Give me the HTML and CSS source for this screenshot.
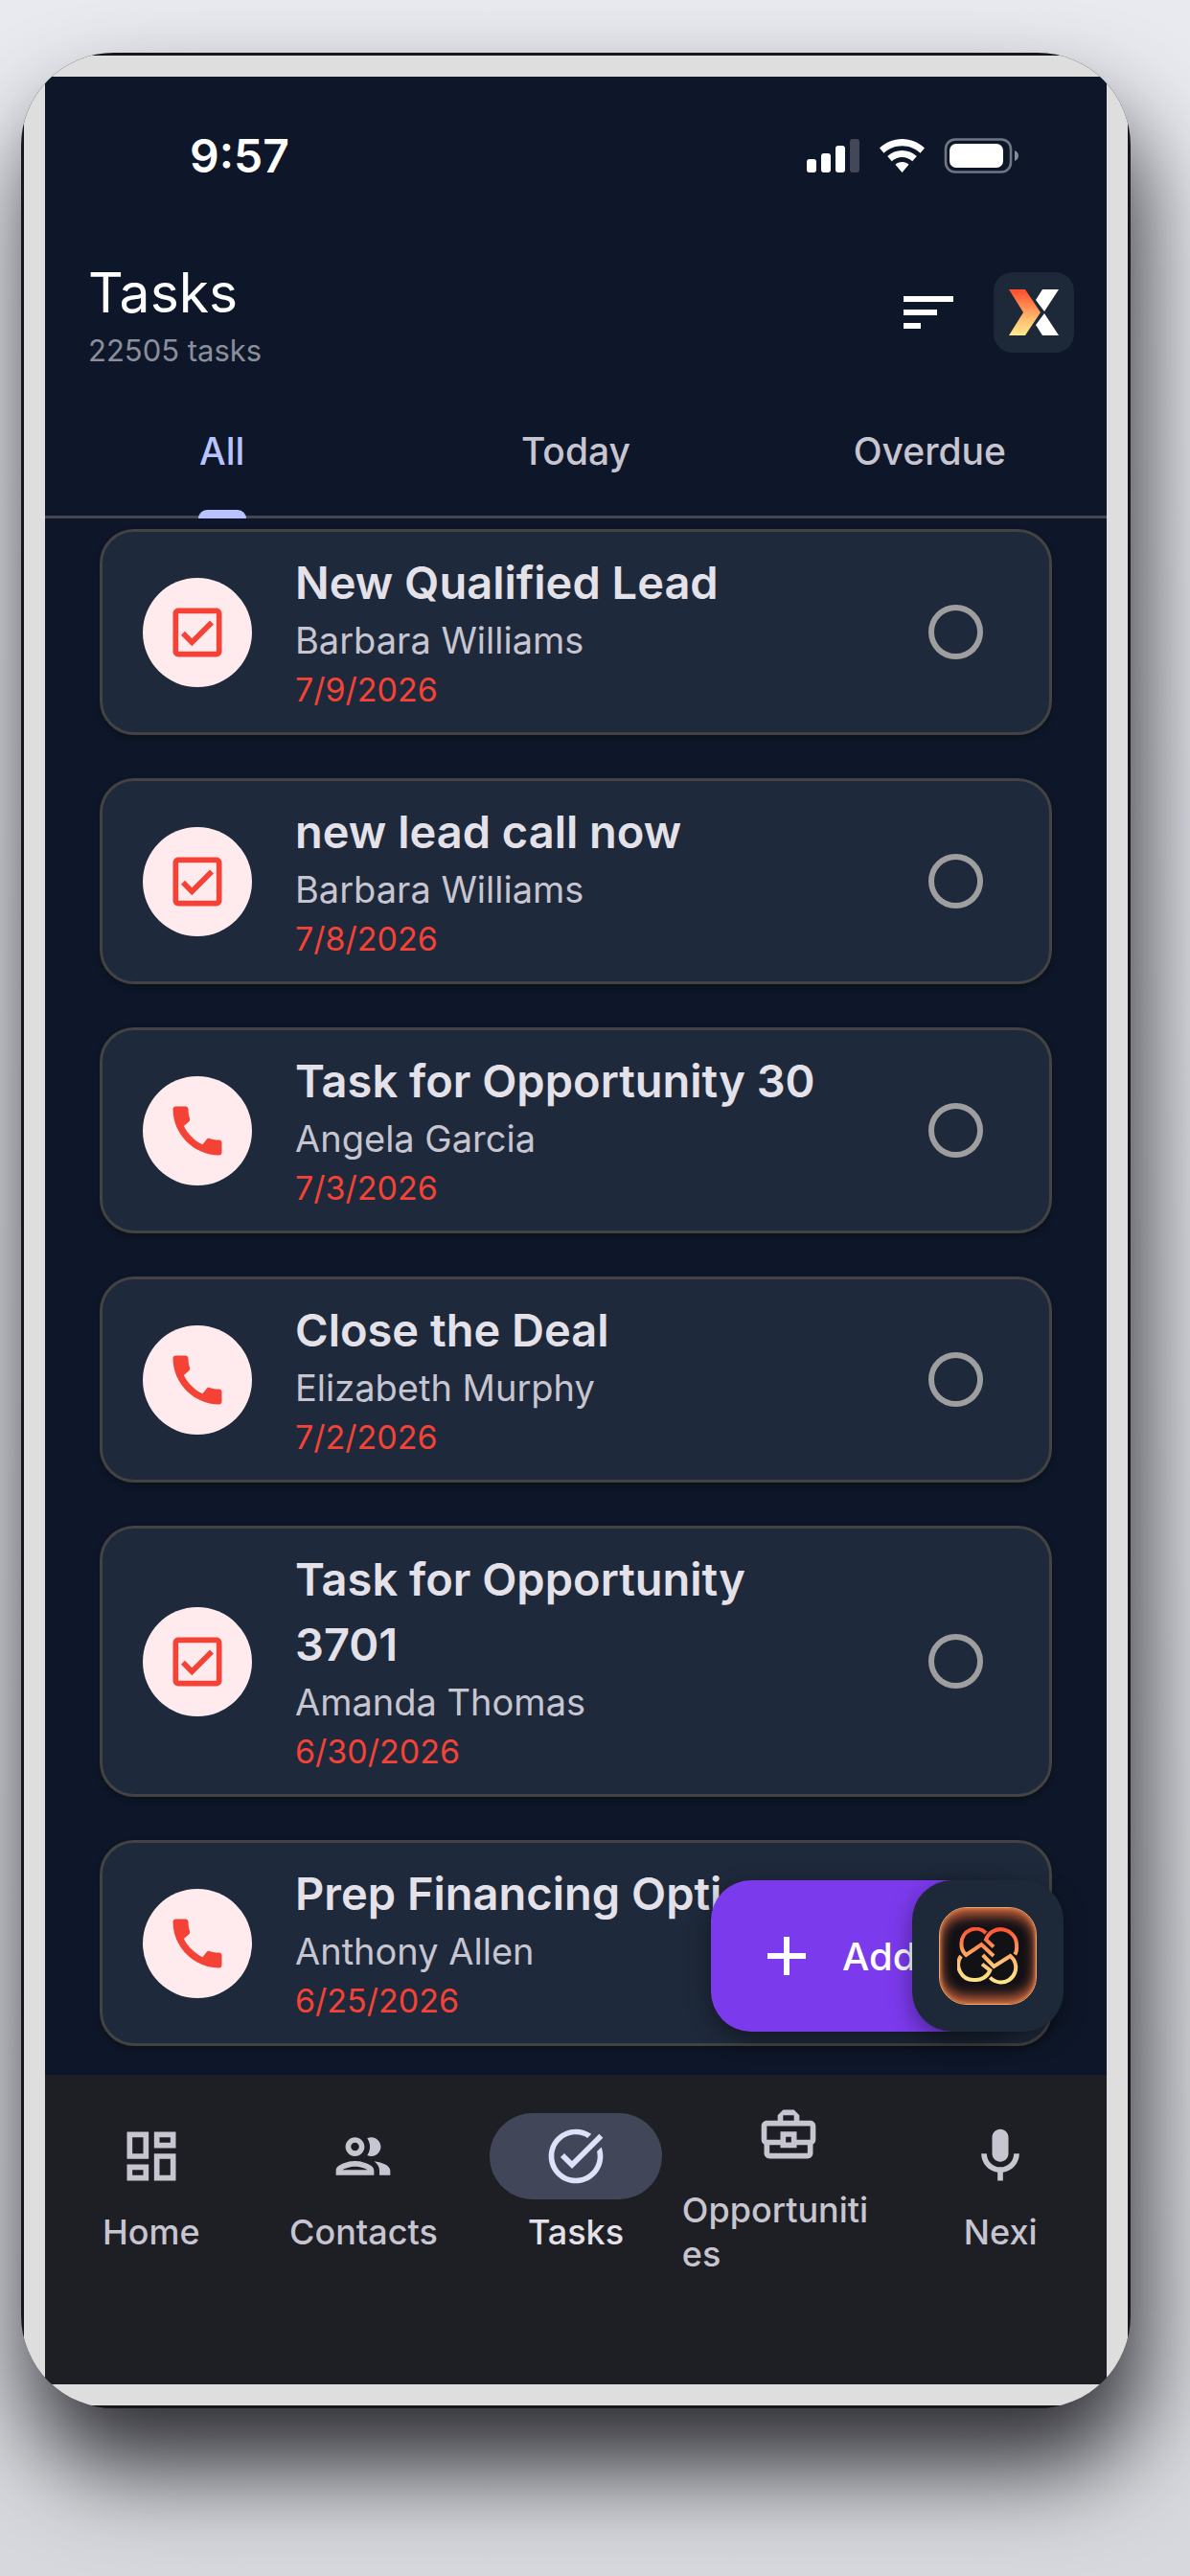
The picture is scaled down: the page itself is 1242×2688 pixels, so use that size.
FILE: index.html
```html
<!DOCTYPE html>
<html lang="en">
<head>
    <meta charset="UTF-8">
    <meta name="viewport" content="width=device-width, initial-scale=1.0">
    <title>Tasks</title>
    <link rel="stylesheet" href="styles.css">
</head>
<body>
    <!-- Shared icon shapes -->
    <svg class="sprite" aria-hidden="true">
        <symbol id="icon-check" viewBox="0 0 24 24">
            <path d="M19 3H5c-1.100 0-2 .9-2 2v14c0 1.100.9 2 2 2h14c1.100 0 2-.9 2-2V5c0-1.100-.9-2-2-2zm0 16H5V5h14v14zM17.990 9l-1.410-1.420-6.590 6.590-2.580-2.570-1.420 1.410 4 3.990z"/>
        </symbol>
        <symbol id="icon-phone" viewBox="0 0 24 24">
            <path d="M20.010 15.380c-1.230 0-2.420-.2-3.530-.56-.35-.12-.74-.03-1.010.24l-1.570 1.970c-2.830-1.350-5.480-3.900-6.890-6.830l1.950-1.660c.27-.28.35-.67.24-1.020-.37-1.110-.56-2.300-.56-3.530 0-.54-.45-.99-.99-.99H4.190C3.650 3 3 3.240 3 3.990 3 13.280 10.730 21 20.010 21c.71 0 .99-.63.99-1.180v-3.450c0-.54-.45-.99-.99-.99z"/>
        </symbol>
    </svg>

    <div class="phone">
        <div class="bezel">
            <div class="screen">
                <div class="status-bar">
                    <span class="time">9:57</span>
                    <svg class="status-icons" width="222" height="38" viewBox="0 0 222 38" fill="#fff">
                        <rect x="0" y="22" width="10" height="14" rx="3"/>
                        <rect x="15" y="16" width="10" height="20" rx="3"/>
                        <rect x="30" y="8" width="10" height="28" rx="3"/>
                        <rect x="45" y="1" width="10" height="35" rx="3" fill="#434758"/>
                        <path d="M99.500 1c9 0 17 3.500 23.500 9.500l-4.500 5.300C113.300 11 106.800 8.300 99.500 8.300S85.700 11 80.500 15.800L76 10.500C82.500 4.500 90.500 1 99.500 1z"/>
                        <path d="M99.500 13c6 0 11 2.200 15.300 6l-4.500 5.300c-3-2.700-6.600-4.300-10.800-4.300s-7.800 1.600-10.800 4.300L84.200 19c4.300-3.800 9.300-6 15.300-6z"/>
                        <path d="M99.500 25c2.800 0 5.200 1 7 2.700l-7 8.300-7-8.300c1.800-1.700 4.200-2.700 7-2.700z"/>
                        <rect x="145" y="1.500" width="68" height="34" rx="10" fill="none" stroke="#717684" stroke-width="2.600"/>
                        <rect x="149" y="6" width="56" height="25" rx="7"/>
                        <path d="M217 13c5.300 2 5.300 9 0 11z" fill="#888c97"/>
                    </svg>
                </div>

                <header class="app-header">
                    <div class="heading">
                        <h1>Tasks</h1>
                        <p>22505 tasks</p>
                    </div>
                    <div class="header-actions">
                        <button class="sort-button" type="button" aria-label="Sort tasks">
                            <svg width="52" height="34" viewBox="0 0 52 34" fill="#fff">
                                <rect width="52" height="6"/>
                                <rect y="14" width="35" height="6"/>
                                <rect y="28" width="18" height="6"/>
                            </svg>
                        </button>
                        <button class="brand-button" type="button" aria-label="Account">
                            <svg width="52" height="48" viewBox="0 0 52 48">
                                <defs>
                                    <linearGradient id="flame" x1="0" y1="0" x2="0" y2="1">
                                        <stop offset="0.050" stop-color="#ff5330"/>
                                        <stop offset="0.650" stop-color="#ffbe6f"/>
                                        <stop offset="1" stop-color="#ffe98f"/>
                                    </linearGradient>
                                </defs>
                                <path fill="url(#flame)" d="M0 0h17l16 24-16 24H0l15-24z"/>
                                <path fill="#fff" d="M35 0h17L37 23 28 11zM37 25l15 23H35l-7-11z"/>
                            </svg>
                        </button>
                    </div>
                </header>

                <nav class="tabs" aria-label="Task filter">
                    <a class="active" href="#all">All</a>
                    <a href="#today">Today</a>
                    <a href="#overdue">Overdue</a>
                </nav>

                <main class="task-area">
                    <ul class="task-list">
                        <li class="task">
                            <span class="task-icon"><svg><use href="#icon-check"/></svg></span>
                            <div class="task-text">
                                <h2>New Qualified Lead</h2>
                                <p>Barbara Williams</p>
                                <time>7/9/2026</time>
                            </div>
                            <input type="checkbox" aria-label="Complete New Qualified Lead">
                        </li>
                        <li class="task">
                            <span class="task-icon"><svg><use href="#icon-check"/></svg></span>
                            <div class="task-text">
                                <h2>new lead call now</h2>
                                <p>Barbara Williams</p>
                                <time>7/8/2026</time>
                            </div>
                            <input type="checkbox" aria-label="Complete new lead call now">
                        </li>
                        <li class="task">
                            <span class="task-icon"><svg><use href="#icon-phone"/></svg></span>
                            <div class="task-text">
                                <h2>Task for Opportunity 30</h2>
                                <p>Angela Garcia</p>
                                <time>7/3/2026</time>
                            </div>
                            <input type="checkbox" aria-label="Complete Task for Opportunity 30">
                        </li>
                        <li class="task">
                            <span class="task-icon"><svg><use href="#icon-phone"/></svg></span>
                            <div class="task-text">
                                <h2>Close the Deal</h2>
                                <p>Elizabeth Murphy</p>
                                <time>7/2/2026</time>
                            </div>
                            <input type="checkbox" aria-label="Complete Close the Deal">
                        </li>
                        <li class="task">
                            <span class="task-icon"><svg><use href="#icon-check"/></svg></span>
                            <div class="task-text">
                                <h2>Task for Opportunity <br>3701</h2>
                                <p>Amanda Thomas</p>
                                <time>6/30/2026</time>
                            </div>
                            <input type="checkbox" aria-label="Complete Task for Opportunity 3701">
                        </li>
                        <li class="task">
                            <span class="task-icon"><svg><use href="#icon-phone"/></svg></span>
                            <div class="task-text">
                                <h2>Prep Financing Opti</h2>
                                <p>Anthony Allen</p>
                                <time>6/25/2026</time>
                            </div>
                            <input type="checkbox" aria-label="Complete Prep Financing">
                        </li>
                    </ul>

                    <!-- Floating buttons over the list -->
                    <button class="add-button" type="button">
                        <svg width="40" height="40" viewBox="0 0 40 40" fill="#fff">
                            <path d="M17 0h6v17h17v6H23v17h-6V23H0v-6h17z"/>
                        </svg>
                        <span>Add</span>
                    </button>
                    <button class="assistant-button" type="button" aria-label="Assistant">
                        <span class="assistant-badge">
                            <svg width="64" height="60" viewBox="0 0 64 60">
                                <defs>
                                    <linearGradient id="knot" gradientUnits="userSpaceOnUse" x1="0" y1="0" x2="0" y2="60">
                                        <stop offset="0" stop-color="#ff4e2e"/>
                                        <stop offset="0.600" stop-color="#ffbe6f"/>
                                        <stop offset="1" stop-color="#ffec8c"/>
                                    </linearGradient>
                                </defs>
                                <g fill="none" stroke="url(#knot)" stroke-width="4">
                                    <path d="M30 6A15 15 0 0 0 4.500 17 15 15 0 0 0 9.300 29L25.300 18 38 30"/>
                                    <path d="M38 20.500L30 13A16.500 16.500 0 0 1 62 19 16 16 0 0 1 60.300 28.500"/>
                                    <path d="M4 30A16 16 0 0 0 17.700 55 16 16 0 0 0 34.300 45L26 38.500"/>
                                    <path d="M26.700 29L38.300 41 55.500 30A15.500 15.500 0 0 1 45 57.500 16 16 0 0 1 34.300 52.500"/>
                                </g>
                            </svg>
                        </span>
                    </button>
                </main>

                <nav class="bottom-nav" aria-label="Main">
                    <a href="#home">
                        <span class="nav-icon">
                            <svg viewBox="0 0 24 24"><path d="M19 5v2h-4V5h4M9 5v6H5V5h4m10 8v6h-4v-6h4M9 17v2H5v-2h4M21 3h-8v6h8V3zM11 3H3v10h8V3zm10 8h-8v10h8V11zm-10 4H3v6h8v-6z"/></svg>
                        </span>
                        <span class="nav-label">Home</span>
                    </a>
                    <a href="#contacts">
                        <span class="nav-icon">
                            <svg viewBox="0 0 24 24"><path d="M9 13.750c-2.340 0-7 1.170-7 3.500V19h14v-1.750c0-2.330-4.660-3.500-7-3.500zM4.340 17c.84-.58 2.870-1.250 4.660-1.250s3.820.67 4.660 1.250H4.340zM9 12c1.930 0 3.500-1.570 3.500-3.500S10.930 5 9 5 5.500 6.570 5.500 8.500 7.070 12 9 12zm0-5c.83 0 1.500.67 1.500 1.500S9.830 10 9 10s-1.500-.67-1.500-1.500S8.170 7 9 7zm7.040 6.810c1.160.84 1.960 1.960 1.960 3.440V19h4v-1.750c0-2.020-3.500-3.170-5.960-3.440zM15 12c1.930 0 3.500-1.570 3.500-3.500S16.930 5 15 5c-.54 0-1.040.13-1.500.35.63.89 1 1.980 1 3.150s-.37 2.260-1 3.150c.46.22.96.35 1.500.35z"/></svg>
                        </span>
                        <span class="nav-label">Contacts</span>
                    </a>
                    <a class="active" href="#tasks">
                        <span class="nav-icon">
                            <svg viewBox="0 0 24 24"><path d="M22 5.180L10.590 16.600l-4.240-4.240 1.410-1.410 2.830 2.830 10-10L22 5.180zM19.790 10.220C19.920 10.790 20 11.390 20 12c0 4.420-3.580 8-8 8s-8-3.580-8-8 3.580-8 8-8c1.580 0 3.040.46 4.280 1.250l1.440-1.440C16.100 2.670 14.130 2 12 2 6.480 2 2 6.480 2 12s4.480 10 10 10 10-4.480 10-10c0-1.190-.22-2.330-.6-3.390l-1.610 1.610z"/></svg>
                        </span>
                        <span class="nav-label">Tasks</span>
                    </a>
                    <a href="#opportunities">
                        <span class="nav-icon">
                            <svg viewBox="0 0 24 24"><path d="M20 7h-4V5l-2-2h-4L8 5v2H4c-1.100 0-2 .9-2 2v5c0 .75.4 1.380 1 1.730V19c0 1.110.89 2 2 2h14c1.110 0 2-.89 2-2v-3.280c.59-.35 1-.99 1-1.720V9c0-1.100-.9-2-2-2zM10 5h4v2h-4V5zM4 9h16v5h-5v-3H9v3H4V9zm9 6h-2v-2h2v2zm6 4H5v-3h4v1h6v-1h4v3z"/></svg>
                        </span>
                        <span class="nav-label multiline">Opportuniti<wbr>es</span>
                    </a>
                    <a href="#nexi">
                        <span class="nav-icon">
                            <svg viewBox="0 0 24 24"><path d="M12 14c1.660 0 3-1.340 3-3V5c0-1.660-1.340-3-3-3S9 3.340 9 5v6c0 1.660 1.340 3 3 3zM17 11c0 2.760-2.240 5-5 5s-5-2.240-5-5H5c0 3.530 2.610 6.430 6 6.920V21h2v-3.080c3.390-.49 6-3.390 6-6.920h-2z"/></svg>
                        </span>
                        <span class="nav-label">Nexi</span>
                    </a>
                </nav>
            </div>
        </div>
    </div>
</body>
</html>
```
FILE: styles.css
```css
* {
    box-sizing: border-box;
}
body {
    min-height: 100vh;
    margin: 0;
    padding: 55px 62px 175px 22px;
    font-family: Inter, "Liberation Sans", sans-serif;
    background: linear-gradient(#e8eaf0, #d7d8dd);
}
h1, h2, p, ul {
    margin: 0;
    padding: 0;
}
a {
    color: inherit;
    text-decoration: none;
}
button {
    display: flex;
    align-items: center;
    justify-content: center;
    padding: 0;
    border: none;
    font-family: inherit;
    cursor: pointer;
}
.sprite {
    display: none;
}

/* Device frame */
.phone {
    padding: 3px;
    background: #17171b;
    border-radius: 97px;
    overflow: hidden;
    box-shadow: 10px 60px 98px rgba(0, 0, 8, 0.8);
}
.bezel {
    padding: 22px;
    background: #dedede;
}
.screen {
    background: #0e1729;
    color: #fff;
}

/* Status bar */
.status-bar {
    display: flex;
    align-items: center;
    justify-content: space-between;
    padding: 53px 91px 51px 151px;
}
.time {
    font-size: 48px;
    font-weight: 600;
    line-height: 60px;
}
.status-icons {
    display: block;
}

/* Title row */
.app-header {
    display: flex;
    align-items: center;
    justify-content: space-between;
    padding: 26px 34px 8px 45px;
}
.heading h1 {
    font-size: 57px;
    font-weight: 400;
    line-height: 72px;
}
.heading p {
    color: #8b8f9b;
    font-size: 31px;
    line-height: 48px;
}
.header-actions {
    display: flex;
    align-items: center;
    gap: 42px;
    padding-bottom: 8px;
}
.sort-button {
    background: none;
}
.brand-button {
    width: 84px;
    height: 84px;
    background: #1d2838;
    border-radius: 20px;
}

/* Filter tabs */
.tabs {
    display: flex;
    border-bottom: 3px solid #47464f;
    color: #c7c5d0;
    font-size: 39px;
    font-weight: 500;
    line-height: 48px;
}
.tabs a {
    position: relative;
    flex: 1;
    padding: 49px 0 43px;
    text-align: center;
}
.tabs .active {
    color: #b8c3ff;
}
.tabs .active::after {
    content: "";
    position: absolute;
    bottom: -3px;
    left: 50%;
    width: 50px;
    height: 9px;
    margin-left: -25px;
    background: #b8c3ff;
    border-radius: 9px 9px 0 0;
}

/* Task cards */
.task-area {
    position: relative;
    padding: 11px 57px 30px;
}
.task-list {
    display: flex;
    flex-direction: column;
    gap: 45px;
    list-style: none;
}
.task {
    display: flex;
    align-items: center;
    gap: 45px;
    padding: 19px 69px 19px 42px;
    background: #1e293b;
    border: 3px solid #434343;
    border-radius: 36px;
    box-shadow: 0 3px 6px rgba(0, 0, 0, 0.3);
}
.task-icon {
    display: flex;
    align-items: center;
    justify-content: center;
    width: 114px;
    height: 114px;
    background: #ffebee;
    border-radius: 50%;
}
.task-icon svg {
    width: 68px;
    height: 68px;
    fill: #f44336;
}
.task-text {
    flex: 1;
}
.task-text h2 {
    color: #e4e1e9;
    font-size: 47px;
    font-weight: 600;
    line-height: 68px;
}
.task-text p {
    color: #c7c5d0;
    font-size: 38px;
    line-height: 52px;
}
.task-text time {
    display: block;
    color: #f44336;
    font-size: 34px;
    line-height: 51px;
}
.task input {
    appearance: none;
    width: 57px;
    height: 57px;
    margin: 0;
    border: 6px solid #9e9e9e;
    border-radius: 50%;
}

/* Floating buttons */
.add-button {
    position: absolute;
    right: 90px;
    bottom: 45px;
    justify-content: flex-start;
    gap: 38px;
    width: 323px;
    height: 158px;
    padding: 0 59px;
    background: #7c3aed;
    border-radius: 42px;
    box-shadow: 0 8px 24px rgba(0, 0, 0, 0.4);
    color: #fff;
    font-size: 40px;
    font-weight: 500;
}
.assistant-button {
    position: absolute;
    right: 45px;
    bottom: 45px;
    width: 158px;
    height: 158px;
    background: #1d2838;
    border-radius: 42px;
    box-shadow: 0 8px 24px rgba(0, 0, 0, 0.4);
}
.assistant-badge {
    display: flex;
    align-items: center;
    justify-content: center;
    width: 102px;
    height: 102px;
    background: #121116;
    border: 1px solid #f0a565;
    border-radius: 29px;
    box-shadow: inset 0 0 4px #e8955c, inset 0 12px 14px -5px #c4603c, inset 0 -12px 14px -5px #c4603c, inset 0 0 14px #8c4630;
}

/* Bottom navigation */
.bottom-nav {
    display: flex;
    align-items: center;
    padding: 17px 0 113px;
    background: #1e1f25;
    color: #c7c5d0;
}
.bottom-nav a {
    display: flex;
    flex: 1;
    flex-direction: column;
    align-items: center;
    gap: 11px;
    min-width: 0;
}
.nav-icon {
    display: flex;
    align-items: center;
    justify-content: center;
    width: 180px;
    height: 90px;
    border-radius: 45px;
}
.nav-icon svg {
    width: 68px;
    height: 68px;
    fill: currentColor;
}
.active .nav-icon {
    background: #424659;
    color: #dde1f9;
}
.nav-label {
    width: 100%;
    font-size: 36px;
    font-weight: 500;
    line-height: 46px;
    text-align: center;
}
.nav-label.multiline {
    text-align: left;
}
.bottom-nav .active .nav-label {
    color: #e4e1e9;
}
```
